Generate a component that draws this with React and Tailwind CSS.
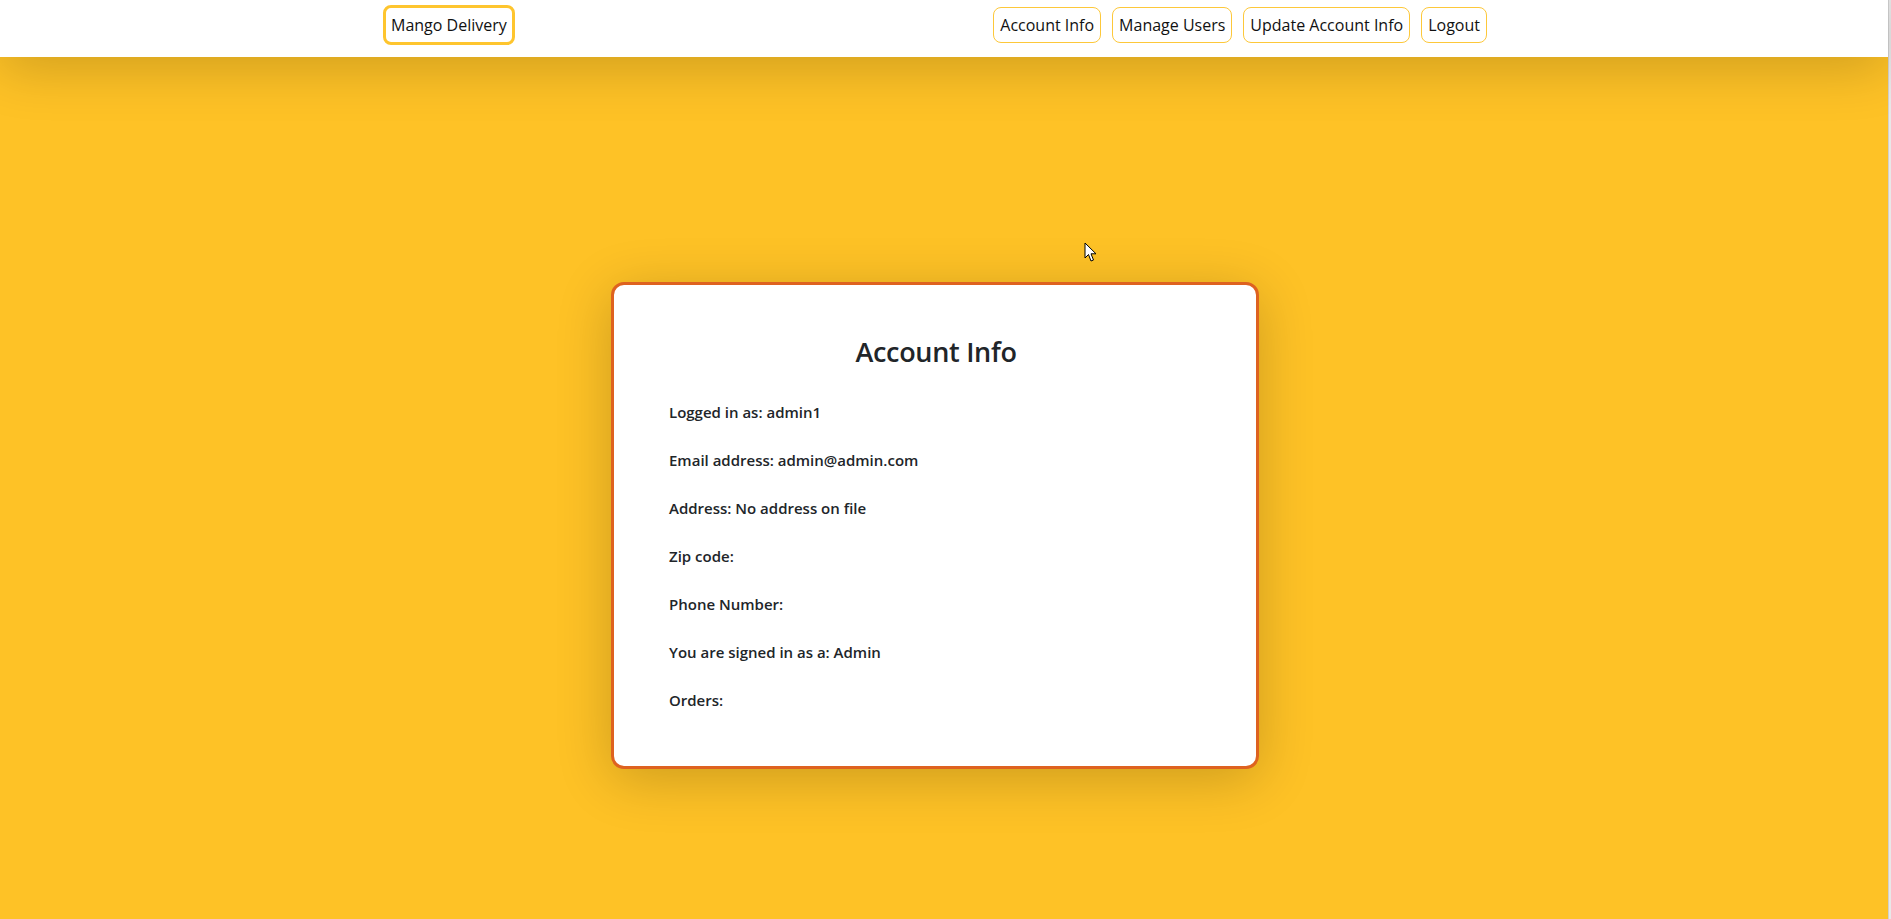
import React from 'react';

const font = { fontFamily: '"Open Sans", "Noto Sans", sans-serif' };

const rows = [
  'Logged in as: admin1',
  'Email address: admin@admin.com',
  'Address: No address on file',
  'Zip code:',
  'Phone Number:',
  'You are signed in as a: Admin',
  'Orders:',
];

function NavButton({ children }) {
  return (
    <a className="border border-[#fdc83a] rounded-lg px-[6px] py-[5px] text-[16px] leading-6 text-[#111] bg-white">
      {children}
    </a>
  );
}

function Cursor() {
  return (
    <svg className="absolute left-[1084px] top-[242px]" width="13" height="21" viewBox="0 0 13 21">
      <path d="M1 1 L1 16 L4.5 12.5 L7 19 L9.5 18 L7 11.8 L12 11.8 Z" fill="#fff" stroke="#000" strokeWidth="1" strokeLinejoin="round" />
    </svg>
  );
}

export default function App() {
  return (
    <div className="flex h-[919px] w-full overflow-hidden" style={font}>
      <div className="relative flex-1 flex flex-col bg-[#fec226]">
        <header className="relative z-10 h-[57px] bg-white shadow-[0_10px_55px_rgba(0,0,0,0.2)] pr-[18px]">
          <nav className="mx-auto w-[1104px] flex justify-between items-start pt-[5px]">
            <a className="border-[3px] border-[#fec52e] rounded-lg px-[5px] py-[5px] text-[16px] leading-6 text-[#111]">
              Mango Delivery
            </a>
            <div className="flex gap-[11px] pt-[2px] pl-[4px]">
              <NavButton>Account Info</NavButton>
              <NavButton>Manage Users</NavButton>
              <NavButton>Update Account Info</NavButton>
              <NavButton>Logout</NavButton>
            </div>
          </nav>
        </header>
        <main className="flex-1 pr-[18px] pt-[225px]">
          <div className="mx-auto w-[648px] bg-white border-[3px] border-[#de6220] rounded-[13px] shadow-[0_10px_55px_rgba(0,0,0,0.2)] pt-[50px] pb-[54px] pl-[55px] pr-[53px] text-[#212529]">
            <h3 className="text-center text-[27px] leading-[34px] font-semibold mb-[31px] tracking-[-0.3px]">Account Info</h3>
            <div className="flex flex-col gap-6">
              {rows.map((r) => (
                <p key={r} className="text-[15px] leading-6 font-semibold">{r}</p>
              ))}
            </div>
          </div>
        </main>
        <Cursor />
      </div>
      <div className="w-[3px] bg-[#e8e8e8] border-l border-[#cfcfcf]" />
    </div>
  );
}
